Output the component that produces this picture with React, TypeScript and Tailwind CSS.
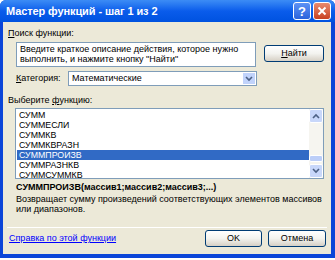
import React from "react";

const items = ["СУММ", "СУММЕСЛИ", "СУММКВ", "СУММКВРАЗН", "СУММПРОИЗВ", "СУММРАЗНКВ", "СУММСУММКВ"];

function Chevron({ up }: { up?: boolean }) {
  return (
    <svg width="8" height="6" viewBox="0 0 8 6">
      <path d={up ? "M1 5 L4 2 L7 5" : "M1 1 L4 4 L7 1"} stroke="#4D6185" strokeWidth="1.6" fill="none" />
    </svg>
  );
}

function XpButton({ children, className }: { children: React.ReactNode; className?: string }) {
  return (
    <div
      className={
        "flex items-center justify-center rounded-[3px] border border-[#003C74] bg-gradient-to-b from-[#FFFFFF] via-[#F3F3EF] to-[#D6D0C5] text-[9px] text-black " +
        (className ?? "")
      }
    >
      {children}
    </div>
  );
}

export default function App() {
  return (
    <div
      className="w-[335px] h-[260px] bg-white"
      style={{ fontFamily: '"Liberation Sans", Arial, sans-serif' }}
    >
      <div className="w-[335px] h-[258px] flex flex-col bg-[#0B45D8] rounded-t-[6px] pl-[3px] pr-[4px] pb-[4px]">
        <div className="h-[22px] -mx-[3px] -mr-[4px] flex items-center rounded-t-[6px] bg-gradient-to-b from-[#3C8CF5] via-[#0A5CEB] to-[#0052E0] pl-[6px] pr-[4px]">
          <span className="text-white font-bold text-[11px] tracking-[-0.1px] flex-1">Мастер функций - шаг 1 из 2</span>
          <div className="w-[18px] h-[18px] rounded-[3px] border border-white bg-gradient-to-b from-[#5D92F5] to-[#2A63DC] flex items-center justify-center text-white font-bold text-[13px] leading-none">?</div>
          <div className="ml-[2px] w-[18px] h-[18px] rounded-[3px] border border-white bg-gradient-to-b from-[#E88A6E] to-[#C8401F] flex items-center justify-center">
            <svg width="10" height="10" viewBox="0 0 10 10">
              <path d="M1.5 1.5 L8.5 8.5 M8.5 1.5 L1.5 8.5" stroke="white" strokeWidth="2" />
            </svg>
          </div>
        </div>
        <div className="flex-1 bg-[#ECE9D8] flex flex-col px-[5px] text-[9px] text-black">
          <div className="mt-[5px] h-[12px] leading-[12px]">
            <span className="underline">П</span>оиск функции:
          </div>
          <div className="flex mt-[3px] pl-[8px]">
            <div className="w-[240px] h-[25px] bg-white border border-[#7F9DB9] px-[3px] pt-[1px] leading-[10px] text-[9px]">
              Введите краткое описание действия, которое нужно выполнить, и нажмите кнопку "Найти"
            </div>
            <XpButton className="ml-[8px] mt-[3px] w-[60px] h-[17px]">
              <span><span className="underline">Н</span>айти</span>
            </XpButton>
          </div>
          <div className="flex items-center mt-[4px] pl-[8px]">
            <span className="w-[52px]"><span className="underline">К</span>атегория:</span>
            <div className="w-[189px] h-[15px] bg-white border border-[#7F9DB9] flex items-center pl-[3px]">
              <span className="flex-1">Математические</span>
              <div className="w-[14px] h-[13px] bg-[#C1D3FB] border border-white flex items-center justify-center">
                <Chevron />
              </div>
            </div>
          </div>
          <div className="mt-[8px] h-[12px] leading-[12px]">
            Выберите <span className="underline">ф</span>ункцию:
          </div>
          <div className="ml-[7px] mt-[2px] w-[309px] h-[71px] bg-white border border-[#7F9DB9] flex">
            <div className="flex-1 pt-[1px] pl-[1px]">
              {items.map((it) => (
                <div
                  key={it}
                  className={
                    "h-[10px] leading-[10px] pl-[2px] text-[8.8px] " +
                    (it === "СУММПРОИЗВ" ? "bg-[#316AC5] text-white" : "")
                  }
                >
                  {it}
                </div>
              ))}
            </div>
            <div className="w-[14px] flex flex-col bg-[#F6F5F0]">
              <div className="h-[14px] bg-[#C8D7FA] border border-white rounded-[2px] flex items-center justify-center">
                <Chevron up />
              </div>
              <div className="flex-1 flex flex-col justify-end pb-[2px]">
                <div className="h-[7px] bg-[#BCCEF8] border border-white rounded-[2px]" />
              </div>
              <div className="h-[14px] bg-[#C8D7FA] border border-white rounded-[2px] flex items-center justify-center">
                <Chevron />
              </div>
            </div>
          </div>
          <div className="pl-[8px] mt-[3px] font-bold text-[9px] h-[11px] leading-[11px]">
            СУММПРОИЗВ(массив1;массив2;массив3;...)
          </div>
          <div className="pl-[8px] mt-[1px] w-[320px] text-[9px] leading-[10px]">
            Возвращает сумму произведений соответствующих элементов массивов или диапазонов.
          </div>
          <div className="flex-1" />
          <div className="h-px bg-[#D0CDBE] border-b border-white -mx-[1px]" />
          <div className="flex items-center h-[21px] mb-[5px]">
            <span className="flex-1 text-[#0000FF] underline text-[9px] pl-[1px]">Справка по этой функции</span>
            <XpButton className="w-[57px] h-[17px]">OK</XpButton>
            <XpButton className="ml-[6px] w-[58px] h-[17px]">Отмена</XpButton>
          </div>
        </div>
      </div>
    </div>
  );
}
